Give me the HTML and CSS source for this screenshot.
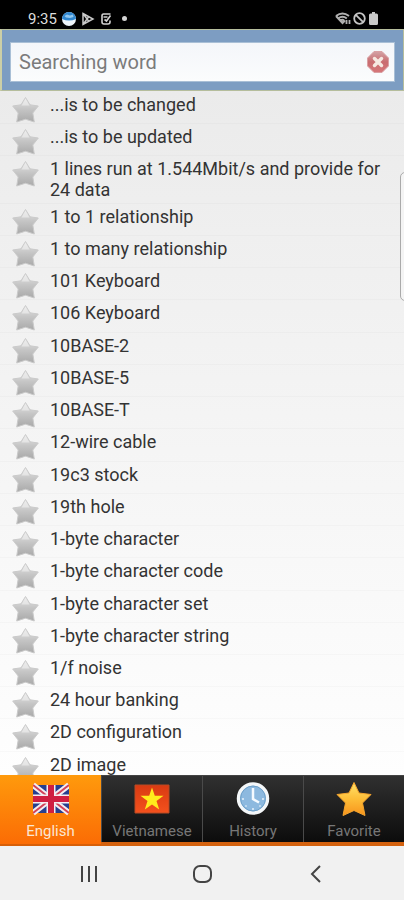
FILE: index.html
```html
<!DOCTYPE html>
<html lang="en">
<head>
<meta charset="utf-8">
<meta name="viewport" content="width=device-width, initial-scale=1">
<title>Dictionary</title>
<link rel="stylesheet" href="styles.css">
</head>
<body>
<svg class="defs" width="0" height="0" aria-hidden="true">
  <defs>
    <linearGradient id="silver" x1="0" y1="0" x2="0" y2="1">
      <stop offset="0" stop-color="#e6e6e6"/><stop offset=".45" stop-color="#c6c6c6"/><stop offset="1" stop-color="#a9a9a9"/>
    </linearGradient>
    <symbol id="star" viewBox="0 0 27 27">
      <path d="M13.500 1.500 18 8.800 26.300 10 20.800 17 22.300 26 13.500 23.200 4.700 26 6.200 17 .700 10 9 8.800Z" fill="url(#silver)" stroke="#cacaca" stroke-width="1" stroke-linejoin="round"/>
      <path d="M9.500 9.500 13.500 2.500 17.500 9.500" fill="#f2f2f2" opacity=".6"/>
    </symbol>
  </defs>
</svg>

<header class="status">
  <span class="time">9:35</span>
  <svg class="status-icon" viewBox="0 0 14 14" aria-hidden="true"><circle cx="7" cy="7" r="7" fill="#eef5fb"/><path d="M0 7a7 7 0 0 1 14 0Q7 10 0 7Z" fill="#2f86cf"/><path d="M2.500 4 5 2.500 8 3.500 11 2.500 11.500 5 8 6 4 5.500Z" fill="#8fc6ee"/></svg>
  <svg class="status-icon" viewBox="0 0 14 14" fill="none" stroke="#c9c9c9" stroke-width="1.500" aria-hidden="true"><path d="M2 1.500 12 7 2 12.500Z M2 1.500 7.500 9 M2 12.500 7.500 5"/></svg>
  <svg class="status-icon edit" viewBox="0 0 14 14" fill="none" stroke="#d2d2d2" stroke-width="1.600" aria-hidden="true"><path d="M10.500 2H3.500Q2 2 2 4V10Q2 12 4 12H8Q10 12 10 10V8.500 M3.500 5H7.500 M4.500 7.500 6.500 9 10.500 3.500"/></svg>
  <span class="dot"></span>
  <span class="spacer"></span>
  <svg class="wifi" viewBox="0 0 16 13" fill="none" stroke="#b0b0b0" stroke-width="2" aria-hidden="true"><path d="M1 4Q7.500-1 14 4 M3.200 6.500Q7.500 3 11.800 6.500 M1 4 7.500 11 10 8.500M5.500 8.500Q7.500 7 9 8.500"/><path d="M11.500 8v4M14.500 12V8" stroke-width="1.800"/></svg>
  <svg class="mute" viewBox="0 0 13 13" fill="none" stroke="#c4c4c4" stroke-width="1.800" aria-hidden="true"><circle cx="6.500" cy="6.500" r="5.300"/><path d="M2.800 2.800 10.200 10.200"/></svg>
  <svg class="battery" viewBox="0 0 9 13" fill="#c9c9c9" aria-hidden="true"><path d="M3 0h3v1.500h1.500Q9 1.500 9 3v8.500Q9 13 7.500 13h-6Q0 13 0 11.500V3Q0 1.500 1.500 1.500H3Z"/></svg>
</header>

<form class="search" role="search">
  <div class="field">
    <input type="text" placeholder="Searching word" aria-label="Searching word">
    <button type="reset" class="clear" aria-label="Clear">
      <svg viewBox="0 0 22 22" aria-hidden="true">
        <defs><linearGradient id="red" x1="0" y1="0" x2="0" y2="1"><stop offset="0" stop-color="#d3a3a6"/><stop offset=".5" stop-color="#c96c70"/><stop offset="1" stop-color="#d6777a"/></linearGradient></defs>
        <path d="M7 .500h8L21.500 7v8L15 21.500H7L.500 15V7Z" fill="url(#red)" stroke="#d9a0a3"/>
        <path d="M7.500 7.500l7 7M14.500 7.500l-7 7" stroke="#f6e9e2" stroke-width="3.500" stroke-linecap="round"/>
      </svg>
    </button>
  </div>
</form>

<main class="results">
  <ul class="words">
    <li><svg class="star"><use href="#star"/></svg><span>...is to be changed</span></li>
    <li><svg class="star"><use href="#star"/></svg><span>...is to be updated</span></li>
    <li><svg class="star"><use href="#star"/></svg><span>1 lines run at 1.544Mbit/s and provide for 24 data</span></li>
    <li><svg class="star"><use href="#star"/></svg><span>1 to 1 relationship</span></li>
    <li><svg class="star"><use href="#star"/></svg><span>1 to many relationship</span></li>
    <li><svg class="star"><use href="#star"/></svg><span>101 Keyboard</span></li>
    <li><svg class="star"><use href="#star"/></svg><span>106 Keyboard</span></li>
    <li><svg class="star"><use href="#star"/></svg><span>10BASE-2</span></li>
    <li><svg class="star"><use href="#star"/></svg><span>10BASE-5</span></li>
    <li><svg class="star"><use href="#star"/></svg><span>10BASE-T</span></li>
    <li><svg class="star"><use href="#star"/></svg><span>12-wire cable</span></li>
    <li><svg class="star"><use href="#star"/></svg><span>19c3 stock</span></li>
    <li><svg class="star"><use href="#star"/></svg><span>19th hole</span></li>
    <li><svg class="star"><use href="#star"/></svg><span>1-byte character</span></li>
    <li><svg class="star"><use href="#star"/></svg><span>1-byte character code</span></li>
    <li><svg class="star"><use href="#star"/></svg><span>1-byte character set</span></li>
    <li><svg class="star"><use href="#star"/></svg><span>1-byte character string</span></li>
    <li><svg class="star"><use href="#star"/></svg><span>1/f noise</span></li>
    <li><svg class="star"><use href="#star"/></svg><span>24 hour banking</span></li>
    <li><svg class="star"><use href="#star"/></svg><span>2D configuration</span></li>
    <li><svg class="star"><use href="#star"/></svg><span>2D image</span></li>
  </ul>
  <span class="edge-handle"></span>
</main>

<nav class="tabs" aria-label="Dictionary">
  <a href="#english" class="active" aria-current="page">
    <svg viewBox="0 0 36 36" aria-hidden="true">
      <path d="M0 4h36v28H0Z" fill="#263f8f"/>
      <path d="M0 4 36 32M36 4 0 32" stroke="#f3eef2" stroke-width="6"/>
      <path d="M0 4 36 32M36 4 0 32" stroke="#d2425a" stroke-width="2"/>
      <path d="M18 4v28M0 18h36" stroke="#f3eef2" stroke-width="9"/>
      <path d="M18 4v28M0 18h36" stroke="#cf1f42" stroke-width="6"/>
    </svg>
    <span>English</span>
  </a>
  <a href="#vietnamese">
    <svg viewBox="0 0 36 36" aria-hidden="true">
      <defs><linearGradient id="vn" x1="0" y1="0" x2="0" y2="1"><stop offset="0" stop-color="#d93a12"/><stop offset="1" stop-color="#f4511d"/></linearGradient></defs>
      <path d="M1 4h34v28H1Z" fill="url(#vn)" stroke="#b94a25"/>
      <path d="M18 6.500l2.800 8.200h8.700l-7 5.200 2.700 8.600L18 23.400l-7.200 5.100 2.700-8.600-7-5.200h8.700Z" fill="#ffec1c"/>
    </svg>
    <span>Vietnamese</span>
  </a>
  <a href="#history">
    <svg viewBox="0 0 36 36" aria-hidden="true">
      <circle cx="18" cy="17.500" r="14.500" fill="#8db9df" stroke="#f4f7f9" stroke-width="3.500"/>
      <circle cx="18" cy="17.500" r="12.500" fill="none" stroke="#6c9fc9"/>
      <path d="M18 7v11l6 3.500" fill="none" stroke="#f5faff" stroke-width="2.500"/>
      <path d="M18 27v2M7 18h2M27 18h2M10.500 25.500l1-1M25.500 25.500l-1-1" stroke="#e7f2fb" stroke-width="1.500"/>
    </svg>
    <span>History</span>
  </a>
  <a href="#favorite">
    <svg viewBox="0 0 36 36" aria-hidden="true">
      <defs><linearGradient id="gold" x1="0" y1="0" x2="0" y2="1"><stop offset="0" stop-color="#ffe36b"/><stop offset=".5" stop-color="#fdbd37"/><stop offset="1" stop-color="#f7941d"/></linearGradient></defs>
      <path d="M18 1.500 23 12 35 13.500 26.500 22 29 34.500 18 29.500 7 34.500 9.500 22 1 13.500 13 12Z" fill="url(#gold)" stroke="#f6a42c" stroke-linejoin="round"/>
    </svg>
    <span>Favorite</span>
  </a>
</nav>

<footer class="system">
  <button type="button" aria-label="Recent apps"><svg viewBox="0 0 20 20" aria-hidden="true"><path d="M3 2v16M10 2v16M17 2v16"/></svg></button>
  <button type="button" aria-label="Home"><svg viewBox="0 0 20 20" aria-hidden="true"><rect x="2" y="2" width="17" height="16" rx="6"/></svg></button>
  <button type="button" aria-label="Back"><svg viewBox="0 0 20 20" aria-hidden="true"><path d="M15 2 7 10 15 18"/></svg></button>
</footer>
</body>
</html>
```
FILE: styles.css
```css
* { box-sizing: border-box; }

body {
  margin: 0;
  height: 100vh;
  display: flex;
  flex-direction: column;
  font-family: Roboto, "Liberation Sans", sans-serif;
  background: #f1f1f1;
  color: #333;
}

.defs { position: absolute; }

.status {
  flex: none;
  display: flex;
  align-items: center;
  height: 29px;
  padding: 8px 26px 0 28px;
  background: #000;
  color: #ddd;
}
.time { font-size: 15px; line-height: 20px; margin-right: 5px; }
.status-icon { width: 14px; height: 14px; margin-right: 5px; }
.edit { margin-right: 8px; }
.dot { width: 5px; height: 5px; border-radius: 50%; background: #d4d4d4; }
.spacer { flex: 1; }
.wifi { width: 16px; height: 13px; margin-right: 2px; }
.mute { width: 13px; height: 13px; margin-right: 3px; }
.battery { width: 9px; height: 13px; }

.search {
  flex: none;
  padding: 12px 8px 8px;
  background: #7d9dc2;
  border: 1px solid #b5bd9c;
  border-left: 2px solid #cdcfa6;
}
.field {
  display: flex;
  align-items: center;
  height: 40px;
  padding: 0 5px 0 8px;
  border: 1px solid #a9bfd6;
  background: linear-gradient(#f4f6fa, #fbfcfd);
}
.field input {
  flex: 1;
  min-width: 0;
  padding: 0;
  border: 0;
  outline: 0;
  background: none;
  font: 20px/24px Roboto, "Liberation Sans", sans-serif;
  color: #333;
}
.field input::placeholder { color: #7b7b7b; opacity: 1; }
.clear { width: 22px; height: 22px; padding: 0; border: 0; background: none; }
.clear svg { display: block; width: 22px; height: 22px; }

.results {
  flex: 1;
  min-height: 0;
  position: relative;
  display: flex;
  flex-direction: column;
  overflow: hidden;
  background: linear-gradient(#ebebeb, #fefefe);
}
.words {
  flex: 1 0 auto;
  display: flex;
  flex-direction: column;
  margin: 0 0 -8px;
  padding: 0;
  list-style: none;
  font-size: 18px;
  line-height: 21px;
}
.words li {
  flex: 1 0 auto;
  display: flex;
  align-items: flex-start;
  padding: 0 16px 0 12px;
  box-shadow: 0 1px 0 rgba(0, 0, 0, 0.02);
}
.words span { padding: 3px 0 2px; }
.star { flex: none; width: 27px; height: 27px; margin: 5px 11px 0 0; }

.edge-handle {
  position: absolute;
  top: 81px;
  right: -6px;
  width: 10px;
  height: 129px;
  border: 1px solid #aaa;
  border-radius: 5px;
  background: #f4f4f4;
}

.tabs {
  flex: none;
  display: grid;
  grid-template-columns: repeat(4, 1fr);
  height: 71px;
  border-top: 1px solid #444;
  border-bottom: 4px solid #d4620f;
  background: #111;
}
.tabs a {
  display: flex;
  flex-direction: column;
  align-items: center;
  padding-top: 5px;
  border-left: 1px solid #4a4a4a;
  background: linear-gradient(#303030, #0c0c0c);
  color: #777;
  font-size: 15px;
  line-height: 18px;
  text-decoration: none;
}
.tabs svg { width: 36px; height: 36px; margin-bottom: 5px; }
.tabs .active {
  margin: -1px 0 -4px;
  padding-top: 6px;
  border-left: 0;
  border-bottom: 2px solid #d75f08;
  background: linear-gradient(#ff9a0c, #fb6c05);
  color: #fbe6d2;
}

.system {
  flex: none;
  display: flex;
  justify-content: center;
  gap: 93px;
  height: 54px;
  padding-top: 18px;
  background: #f1f1f1;
}
.system button { width: 20px; height: 20px; padding: 0; border: 0; background: none; }
.system svg { display: block; width: 20px; height: 20px; fill: none; stroke: #444; stroke-width: 2; }
```
